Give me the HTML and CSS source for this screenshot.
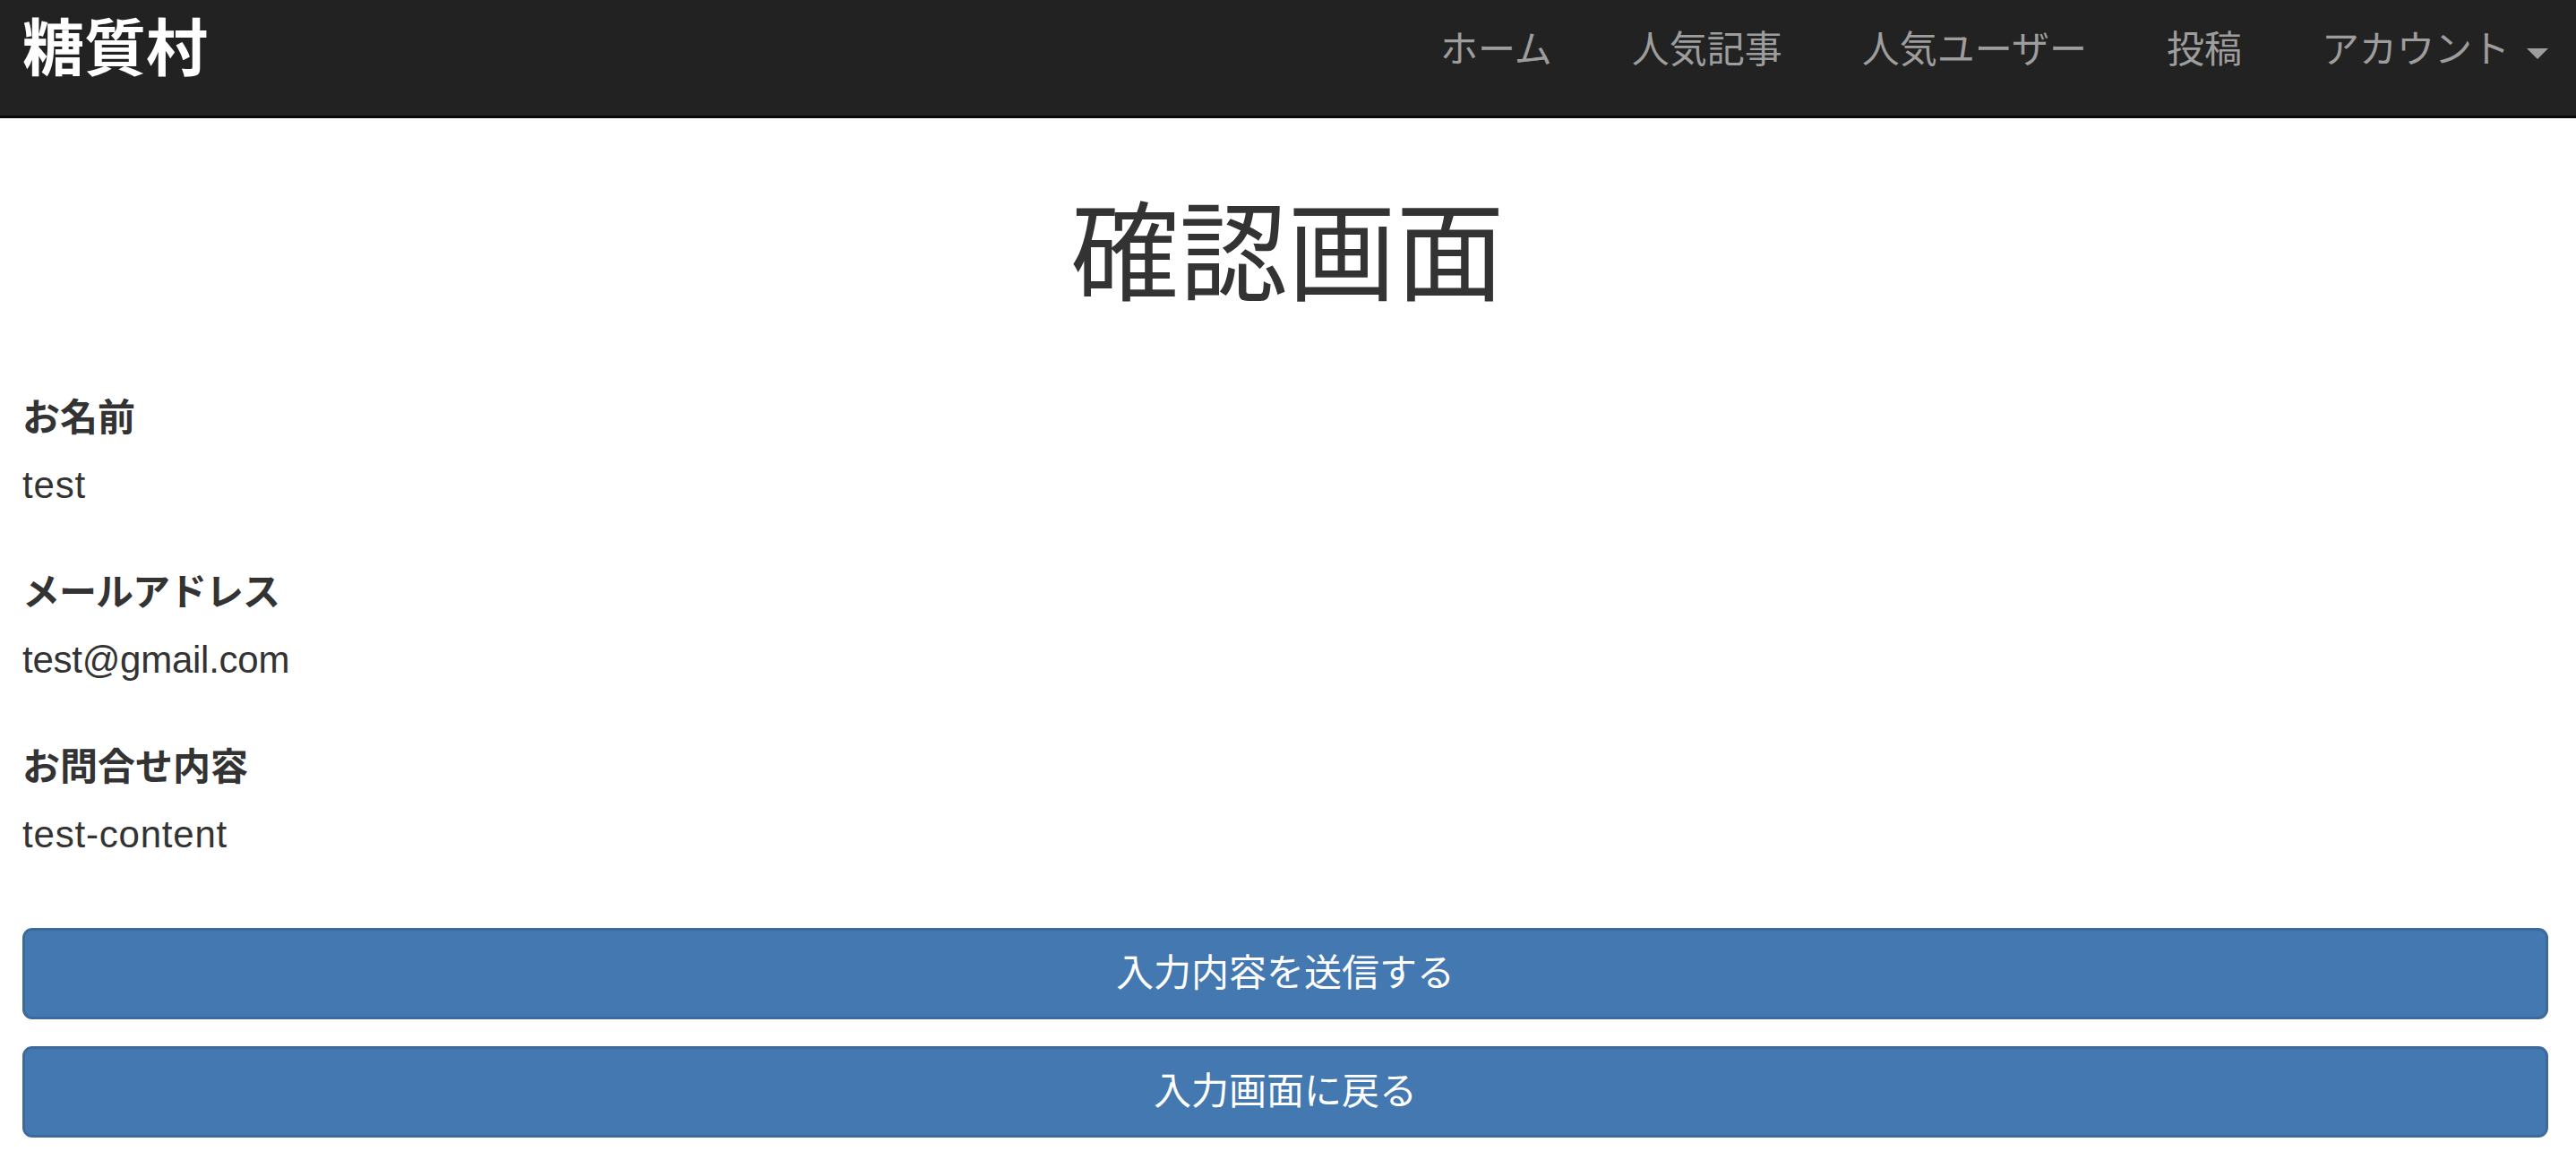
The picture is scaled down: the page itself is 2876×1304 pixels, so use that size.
FILE: index.html
```html
<!DOCTYPE html>
<html lang="ja">

<head>
  <meta charset="UTF-8" />
  <meta name="viewport" content="width=device-width, initial-scale=1.0" />
  <title>確認画面 | 糖質村</title>
  <link rel="stylesheet" href="styles.css">
</head>

<body>
  <header class="navbar">
    <a class="brand" href="#">糖質村</a>
    <nav class="nav-links">
      <a href="#">ホーム</a>
      <a href="#">人気記事</a>
      <a href="#">人気ユーザー</a>
      <a href="#">投稿</a>
      <a href="#">アカウント<span class="caret"></span></a>
    </nav>
  </header>

  <main class="container">
    <h1>確認画面</h1>
    <form>
      <div class="field">
        <label>お名前</label>
        <p>test</p>
      </div>
      <div class="field">
        <label class="tight">メールアドレス</label>
        <p class="email">test@gmail.com</p>
      </div>
      <div class="field">
        <label>お問合せ内容</label>
        <p>test-content</p>
      </div>
      <button class="btn" type="submit">入力内容を送信する</button>
      <button class="btn" type="button">入力画面に戻る</button>
    </form>
  </main>
</body>

</html>
```

FILE: styles.css
```css
* {
  margin: 0;
  padding: 0;
  box-sizing: border-box;
}

body {
  font-family: 'Liberation Sans', 'Noto Sans CJK JP', sans-serif;
  font-size: 42px;
  line-height: 60px;
  background: white;
  color: #333;
}

.navbar {
  height: 132px;
  padding: 0 31px 0 25px;
  background: #222;
  border-bottom: 3px solid #080808;
  display: flex;
  justify-content: space-between;
  align-items: center;
}

.brand {
  color: white;
  font-size: 69px;
  font-weight: bold;
  text-decoration: none;
  margin-top: -17px;
}

.nav-links {
  display: flex;
  gap: 89px;
  margin-top: -17px;
}

.nav-links a {
  color: #9d9d9d;
  text-decoration: none;
  display: flex;
  align-items: center;
}

.caret {
  width: 0;
  height: 0;
  margin-left: 19px;
  margin-top: 8px;
  border-top: 12px solid #9d9d9d;
  border-left: 12px solid transparent;
  border-right: 12px solid transparent;
}

.container {
  padding: 0 31px 0 25px;
}

h1 {
  font-size: 121px;
  font-weight: normal;
  line-height: 132px;
  text-align: center;
  padding-left: 5px;
  margin-top: 86px;
  margin-bottom: 87px;
}

.field {
  margin-bottom: 60px;
}

.field label {
  display: block;
  font-weight: bold;
  margin-bottom: 15px;
}

.field p {
  letter-spacing: 0.8px;
}

.field .tight {
  letter-spacing: -1px;
}

.field .email {
  letter-spacing: -0.25px;
}

.btn {
  display: block;
  width: 100%;
  height: 102px;
  margin-top: 30px;
  background: #4478b1;
  border: 3px solid #3d6a9a;
  border-radius: 11px;
  color: white;
  font: inherit;
}

.field + .btn {
  margin-top: 74px;
}
```
